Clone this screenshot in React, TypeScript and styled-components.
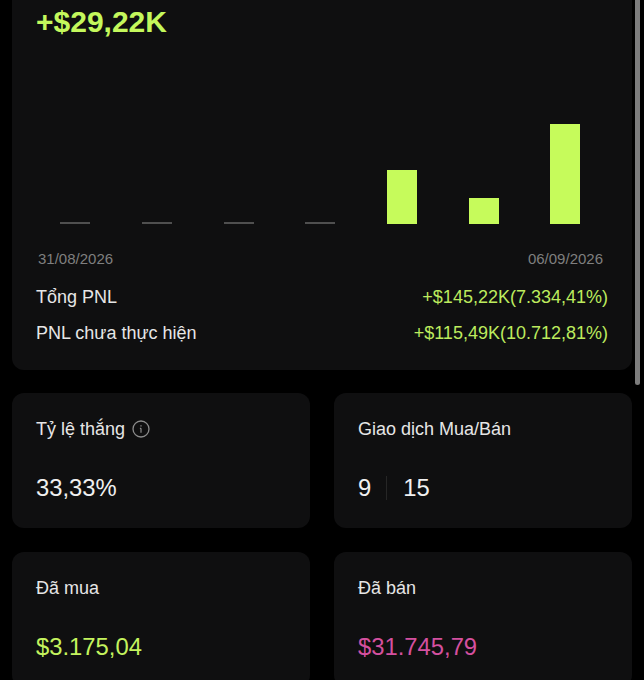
import React from 'react';
import styled, {createGlobalStyle} from 'styled-components';

const GlobalStyle = createGlobalStyle`
  * {
    box-sizing: border-box;
  }
  html, body {
    margin: 0;
    padding: 0;
    background-color: #000;
  }
  body {
    font-family: "Liberation Sans", Arial, "Noto Sans", sans-serif;
  }
`;

const Page = styled.div`
  position: relative;
  height: 680px;
  overflow: hidden;
  padding: 0 12px;
  background-color: #000;
`;

const ScrollThumb = styled.div`
  position: absolute;
  top: 0;
  right: 4px;
  width: 5px;
  height: 385px;
  border-radius: 0 0 3px 3px;
  background-color: #7d7d7d;
`;

const Card = styled.section`
  background-color: #0f0f10;
  border-radius: 12px;
`;

const SummaryCard = styled(Card)`
  height: 370px;
  padding: 8px 24px 0;
  border-radius: 0 0 12px 12px;
`;

const Headline = styled.div`
  font-size: 30px;
  line-height: 28px;
  font-weight: 700;
  color: #c4f85c;
`;

const Chart = styled.div`
  display: flex;
  align-items: flex-end;
  justify-content: space-between;
  height: 188px;
  padding: 0 27.5px 0 24.3px;
`;

const Bar = styled.div<{ $height: number }>`
  width: 30px;
  height: ${p => p.$height}px;
  background-color: ${p => (p.$height > 2 ? '#c6fb5b' : '#4f4f4f')};
`;

const DateRow = styled.div`
  display: flex;
  justify-content: space-between;
  margin-top: 26px;
  padding: 0 5px 0 2px;
  font-size: 15px;
  line-height: 18px;
  color: #7f7f7f;
`;

const PnlRow = styled.div`
  display: flex;
  justify-content: space-between;
  font-size: 18px;
  line-height: 22px;
  color: #e6e6e6;
  margin-top: 18px;

  & + & {
    margin-top: 14px;
  }
`;

const PnlValue = styled.span`
  color: #bdeb5e;
`;

const Grid = styled.div`
  display: grid;
  grid-template-columns: 298px 298px;
  gap: 24px;
  margin-top: 23px;
`;

const StatCard = styled(Card)`
  height: 135px;
  padding: 25px 24px 0;
`;

const StatLabel = styled.div`
  display: flex;
  align-items: center;
  gap: 7px;
  font-size: 18px;
  line-height: 22px;
  color: #e6e6e6;
`;

const StatValue = styled.div<{ $color?: string }>`
  display: flex;
  align-items: center;
  margin-top: 32px;
  font-size: 23.8px;
  line-height: 32px;
  color: ${p => p.$color || '#f0f0f0'};
`;

const Divider = styled.span`
  width: 1px;
  height: 24px;
  margin: 0 16px 0 15px;
  background-color: #262626;
`;

const InfoIcon = styled.svg`
  width: 18px;
  height: 18px;
  fill: none;
  stroke: #8c8c8c;
`;

const bars = [2, 2, 2, 2, 54, 26, 100];

function App() {
    return (
        <Page>
            <GlobalStyle/>
            <SummaryCard>
                <Headline>+$29,22K</Headline>
                <Chart>
                    {bars.map((h, i) => <Bar key={i} $height={h}/>)}
                </Chart>
                <DateRow>
                    <span>31/08/2026</span>
                    <span>06/09/2026</span>
                </DateRow>
                <PnlRow>
                    <span>Tổng PNL</span>
                    <PnlValue>+$145,22K(7.334,41%)</PnlValue>
                </PnlRow>
                <PnlRow>
                    <span>PNL chưa thực hiện</span>
                    <PnlValue>+$115,49K(10.712,81%)</PnlValue>
                </PnlRow>
            </SummaryCard>
            <Grid>
                <StatCard>
                    <StatLabel>
                        Tỷ lệ thắng
                        <InfoIcon viewBox="0 0 18 18">
                            <circle cx="9" cy="9" r="8" strokeWidth="1.3"/>
                            <path d="M9 8.2v4.6M7.9 8.3H9" strokeWidth="1.2"/>
                            <path d="M9 5.2v1.2" strokeWidth="1.3"/>
                        </InfoIcon>
                    </StatLabel>
                    <StatValue>33,33%</StatValue>
                </StatCard>
                <StatCard>
                    <StatLabel>Giao dịch Mua/Bán</StatLabel>
                    <StatValue>9<Divider/>15</StatValue>
                </StatCard>
                <StatCard>
                    <StatLabel>Đã mua</StatLabel>
                    <StatValue $color="#c4f35e">$3.175,04</StatValue>
                </StatCard>
                <StatCard>
                    <StatLabel>Đã bán</StatLabel>
                    <StatValue $color="#d4509f">$31.745,79</StatValue>
                </StatCard>
            </Grid>
            <ScrollThumb/>
        </Page>
    );
}

export default App;
